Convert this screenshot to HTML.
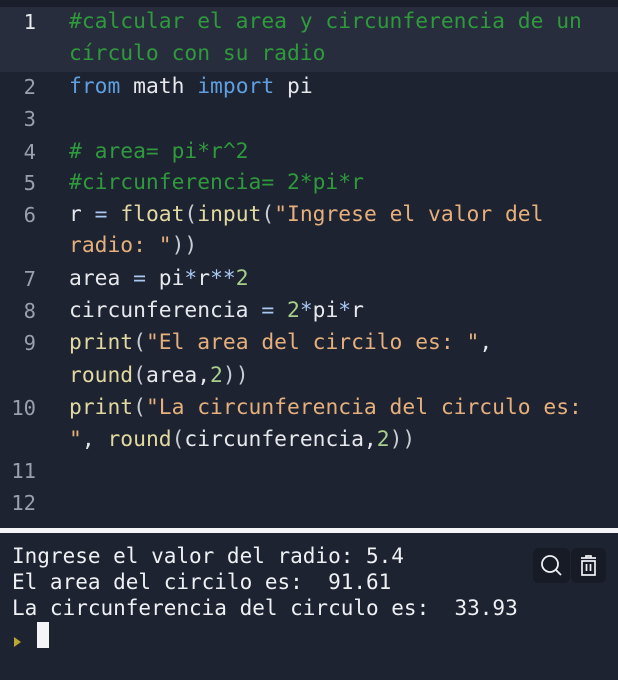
<!DOCTYPE html>
<html><head><meta charset="utf-8"><style>
html,body{margin:0;padding:0;width:618px;height:680px;overflow:hidden;background:#1e2331;}
.ed{position:absolute;left:0;top:0;width:618px;height:528px;background:#1e2331;font-family:"DejaVu Sans Mono","Liberation Mono",monospace;font-size:21.3px;color:#e6e8ec;}
.topbar{position:absolute;left:0;top:0;width:618px;height:7px;background:#1a1e2a;}
.hl{position:absolute;left:0;top:7px;width:618px;height:65px;background:#272d3c;}
.ln{position:absolute;left:0;width:36px;text-align:right;color:#9aa0ab;font-size:20.5px;}
.ln1{color:#e8eaee;}
.t{position:absolute;left:69px;white-space:pre;}
.c{color:#2f9a3c}.k{color:#5e9fe0}.f{color:#e2d9a0}.s{color:#e6b07c}.o{color:#a9c9f2}.n{color:#a8d08c}.p{color:#c8ccd4}
.sep{position:absolute;left:0;top:528px;width:618px;height:5px;background:#f4f5f7;}
.con{position:absolute;left:0;top:533px;width:618px;height:147px;background:#1e2331;font-family:"DejaVu Sans Mono","Liberation Mono",monospace;font-size:21px;color:#eef0f3;}
.cl{position:absolute;left:12px;white-space:pre;}
.btn{position:absolute;top:15px;height:35px;background:#171b26;border-radius:6px;}
</style></head><body>
<div class="ed">
<div class="topbar"></div>
<div class="hl"></div>
<div class="ln ln1" style="top:10px">1</div><div class="t c" style="top:9px">#calcular el area y circunferencia de un</div>
<div class="t c" style="top:41px">círculo con su radio</div>
<div class="ln" style="top:75px">2</div><div class="t" style="top:74px"><span class="k">from</span> math <span class="k">import</span> pi</div>
<div class="ln" style="top:107px">3</div>
<div class="ln" style="top:140px">4</div><div class="t c" style="top:139px"># area= pi*r^2</div>
<div class="ln" style="top:171px">5</div><div class="t c" style="top:170px">#circunferencia= 2*pi*r</div>
<div class="ln" style="top:203px">6</div><div class="t" style="top:202px">r <span class="o">=</span> <span class="f">float</span><span class="p">(</span><span class="f">input</span><span class="p">(</span><span class="s">"Ingrese el valor del</span></div>
<div class="t" style="top:233px"><span class="s">radio: "</span><span class="p">))</span></div>
<div class="ln" style="top:267px">7</div><div class="t" style="top:266px">area <span class="o">=</span> pi<span class="o">*</span>r<span class="o">**</span><span class="n">2</span></div>
<div class="ln" style="top:299px">8</div><div class="t" style="top:298px">circunferencia <span class="o">=</span> <span class="n">2</span><span class="o">*</span>pi<span class="o">*</span>r</div>
<div class="ln" style="top:331px">9</div><div class="t" style="top:330px"><span class="f">print</span><span class="p">(</span><span class="s">"El area del circilo es: "</span>,</div>
<div class="t" style="top:363px"><span class="f">round</span><span class="p">(</span>area,<span class="n">2</span><span class="p">))</span></div>
<div class="ln" style="top:396px">10</div><div class="t" style="top:395px"><span class="f">print</span><span class="p">(</span><span class="s">"La circunferencia del circulo es:</span></div>
<div class="t" style="top:427px"><span class="s">"</span>, <span class="f">round</span><span class="p">(</span>circunferencia,<span class="n">2</span><span class="p">))</span></div>
<div class="ln" style="top:459px">11</div>
<div class="ln" style="top:491px">12</div>
</div>
<div class="sep"></div>
<div class="con">
<div class="cl" style="top:11px">Ingrese el valor del radio: 5.4</div>
<div class="cl" style="top:37px">El area del circilo es:  91.61</div>
<div class="cl" style="top:63px">La circunferencia del circulo es:  33.93</div>
<div style="position:absolute;left:13px;top:96px;width:10px;height:12px;"><svg width="10" height="12" viewBox="0 0 10 12"><path d="M1 1 L8 6 L1 11 Z" fill="#b8a830"/></svg></div>
<div style="position:absolute;left:37px;top:89px;width:12px;height:26px;background:#f4f5f8;"></div>
<div class="btn" style="left:533px;width:37px"><svg width="37" height="35" viewBox="0 0 37 35"><circle cx="17" cy="16" r="8" fill="none" stroke="#eef0f3" stroke-width="1.8"/><path d="M23 22 L28 27" stroke="#eef0f3" stroke-width="1.8"/></svg></div>
<div class="btn" style="left:571px;width:35px"><svg width="35" height="35" viewBox="0 0 35 35"><path d="M10 10 H25 M15 10 V8 H20 V10 M11 13 H24 V27 H11 Z M15.5 16 V23 M19.5 16 V23" fill="none" stroke="#eef0f3" stroke-width="1.7"/></svg></div>
</div>
</body></html>
